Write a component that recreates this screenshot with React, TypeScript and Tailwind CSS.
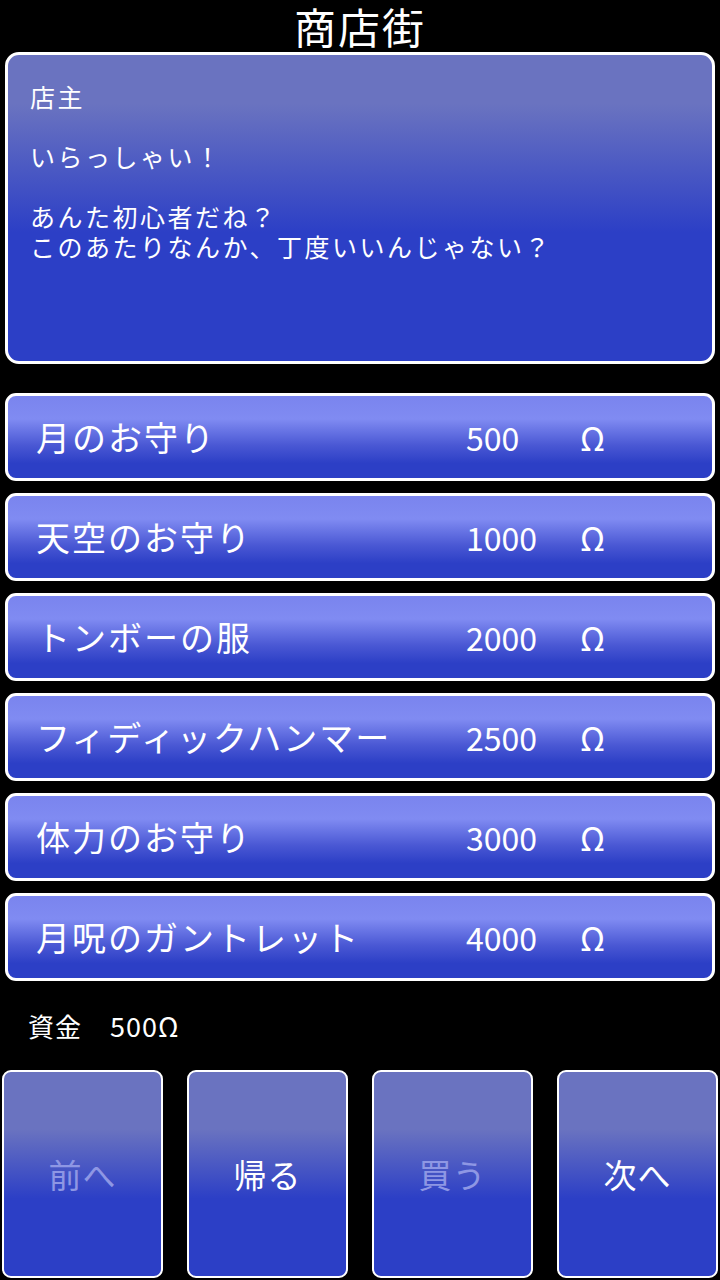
import React from 'react';

type Item = { name: string; price: number };

const items: Item[] = [
    { name: '月のお守り', price: 500 },
    { name: '天空のお守り', price: 1000 },
    { name: 'トンボーの服', price: 2000 },
    { name: 'フィディックハンマー', price: 2500 },
    { name: '体力のお守り', price: 3000 },
    { name: '月呪のガントレット', price: 4000 },
];

const buttons = [
    { label: '前へ', enabled: false },
    { label: '帰る', enabled: true },
    { label: '買う', enabled: false },
    { label: '次へ', enabled: true },
];

const font = { fontFamily: '"Noto Sans CJK JP", "Noto Sans", sans-serif' };

const App: React.FC = () => {
    return (
        <div className="w-[720px] h-[1280px] bg-black text-white flex flex-col overflow-hidden" style={font}>
            <h1 className="h-[52px] flex items-center justify-center text-[42px] leading-[52px] font-normal tracking-[2px]">
                商店街
            </h1>

            <div className="mx-[5px] h-[312px] border-[3px] border-white rounded-[14px] bg-[linear-gradient(to_bottom,#6a73c0_0%,#6a73c0_16%,#2c3fc6_58%,#2c3fc6_100%)] px-[22px] pt-[26px] text-[25px] leading-[30px] tracking-[2.5px]">
                <p>店主</p>
                <p className="mt-[30px]">いらっしゃい！</p>
                <p className="mt-[30px]">
                    あんた初心者だね？
                    <br />
                    このあたりなんか、丁度いいんじゃない？
                </p>
            </div>

            <div className="mt-[29px] mx-[5px] flex flex-col gap-[12px]">
                {items.map((item) => (
                    <div
                        key={item.name}
                        className="h-[88px] border-[3px] border-white rounded-[11px] bg-[linear-gradient(to_bottom,#7a84ee_0%,#808bf2_28%,#4a58d4_60%,#2c3fc6_82%,#2c3fc6_100%)] flex items-center"
                    >
                        <span className="pl-[28px] w-[458px] text-[34px] leading-none tracking-[2px] whitespace-nowrap">{item.name}</span>
                        <span className="w-[114px] text-[32px] leading-none tabular-nums">{item.price}</span>
                        <span className="text-[33px] leading-none">Ω</span>
                    </div>
                ))}
            </div>

            <div className="h-[89px] flex items-center pl-[28px] text-[26px] leading-none">
                <span className="tracking-[1px]">資金</span>
                <span className="ml-[28px] text-[27px] tracking-[1px]">500Ω</span>
            </div>

            <div className="px-[2px] grid grid-cols-4 gap-[24px]">
                {buttons.map((b) => (
                    <div
                        key={b.label}
                        className="h-[208px] border-[2px] border-white rounded-[9px] bg-[linear-gradient(to_bottom,#6a73c0_0%,#6a73c0_28%,#2c3fc6_62%,#2c3fc6_100%)] flex items-center justify-center"
                    >
                        <span className={`text-[33px] leading-none tracking-[1px] ${b.enabled ? 'text-white' : 'text-[#8e97e4]'}`}>
                            {b.label}
                        </span>
                    </div>
                ))}
            </div>
        </div>
    );
};

export default App;
